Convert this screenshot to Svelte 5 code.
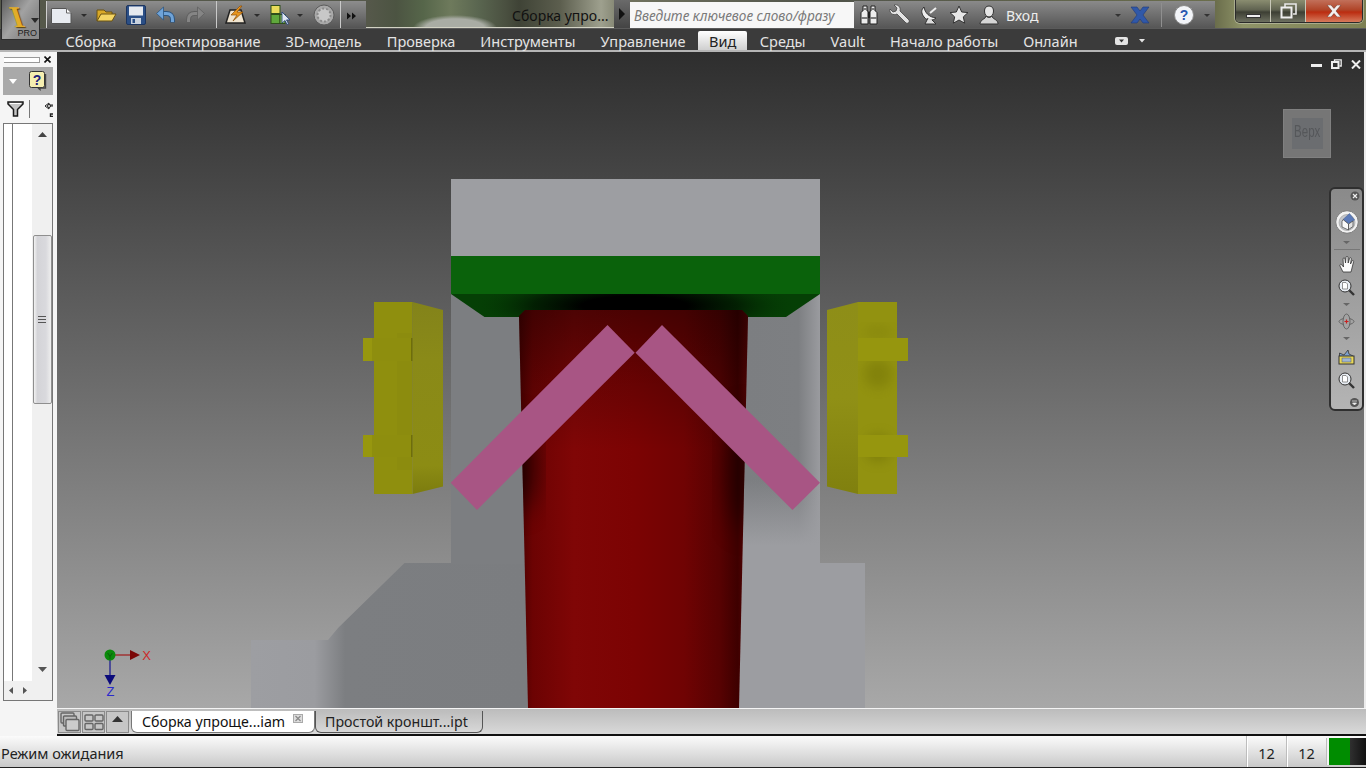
<script>
  const menu = ['Сборка', 'Проектирование', '3D-модель', 'Проверка', 'Инструменты', 'Управление', 'Вид', 'Среды', 'Vault', 'Начало работы', 'Онлайн'];
</script>

<div class="app">
  <header class="titlebar">
    <div class="appbtn">
      <span class="appi">I</span>
      <svg class="apparrow" width="8" height="5" viewBox="0 0 8 5"><path d="M0 0h8L4 5z" fill="#2a2a2a" /></svg>
      <span class="pro">PRO</span>
    </div>

    <div class="qat">
      <svg width="320" height="28" viewBox="46 1 320 28">
        <!-- new -->
        <path d="M51.500 8.500h15l4.500 4.500v10.500h-19.500z" fill="#e8ebf0" stroke="#555" />
        <path d="M66.500 8.500v4.500h4.500" fill="#fff" stroke="#666" />
        <path d="M81 14h6l-3 3z" fill="#2c2c2c" />
        <!-- open -->
        <path d="M97 21V10h7l2 2h6v3" fill="#d9a928" stroke="#6b5312" />
        <path d="M97 21l4-7h15l-4 7z" fill="#f4d564" stroke="#6b5312" />
        <!-- save -->
        <rect x="126.500" y="5.500" width="19" height="19" rx="1.500" fill="#2b4f86" stroke="#1c3560" />
        <rect x="129" y="6.500" width="14" height="9" fill="#e5e9ef" />
        <rect x="131" y="18" width="10" height="6" fill="#c9d2de" />
        <rect x="132.500" y="19" width="2.500" height="4" fill="#2b4f86" />
        <!-- undo / redo -->
        <path d="M172.500 22.500v-3c0-4-2.500-6-6-6H161" fill="none" stroke="#2d557f" stroke-width="5" />
        <path d="M172.500 22v-2.500c0-4-2.500-6-6-6H161" fill="none" stroke="#6fa3d8" stroke-width="3" />
        <path d="M156.500 13.500l7-6.500v13z" fill="#6fa3d8" stroke="#2d557f" stroke-width="0.800" />
        <path d="M188.500 22.500v-3c0-4 2.500-6 6-6H200" fill="none" stroke="#5f5f5f" stroke-width="5" />
        <path d="M188.500 22v-2.500c0-4 2.500-6 6-6H200" fill="none" stroke="#858585" stroke-width="3" />
        <path d="M204.500 13.500l-7-6.500v13z" fill="#858585" stroke="#5f5f5f" stroke-width="0.800" />
        <path d="M216.500 1v28" stroke="#c9c9c9" />
        <!-- update -->
        <path d="M226 23l4-13h11l4 13z" fill="#f0e4cf" stroke="#222" stroke-width="1.500" />
        <path d="M240 6l-9 9h6l-4 6 10-9h-6l5-6z" fill="#e8951f" stroke="#8a4e08" stroke-width="0.700" />
        <path d="M254 14h6l-3 3z" fill="#2c2c2c" />
        <!-- select -->
        <rect x="271" y="5.500" width="9" height="8" fill="#e9dc5a" stroke="#2f4f1a" />
        <rect x="271" y="14.500" width="9" height="9" fill="#5fa83c" stroke="#2f4f1a" />
        <rect x="280" y="14.500" width="5" height="9" fill="#8cbc62" stroke="#2f4f1a" />
        <path d="M282 12v11l3-2.500 2 4 1.500-.8-2-3.800h3.500z" fill="#dfe6f2" stroke="#1d3c77" stroke-width="0.800" />
        <path d="M297 14h6l-3 3z" fill="#2c2c2c" />
        <!-- material -->
        <circle cx="324" cy="15" r="10" fill="#a9a9a9" stroke="#5c5c5c" />
        <circle cx="324" cy="15" r="6.500" fill="#c8c8c8" stroke="#8b8b8b" stroke-dasharray="2 2" stroke-width="2" />
        <path d="M340.500 1v28" stroke="#c9c9c9" />
        <path d="M347 12.500l4 3.500-4 3.500zM352 12.500l4 3.500-4 3.500z" fill="#111" />
      </svg>
    </div>

    <div class="doctitle">Сборка упро...</div>
    <div class="searchbtn"><svg width="6" height="12" viewBox="0 0 6 12"><path d="M0 0l6 6-6 6z" fill="#111" /></svg></div>
    <div class="search">Введите ключевое слово/фразу</div>

    <div class="infobar">
      <svg class="binoc" width="20" height="20" viewBox="0 0 20 20">
        <path d="M4 1h4v5h1v13H2V8c0-1 1-2 2-2zM12 1h4v5c1 0 2 1 2 2v11h-7V6h1z" fill="#ececec" stroke="#222" />
        <path d="M9 7h2v6H9z" fill="#222" />
        <path d="M2.500 13h6M11.500 13h6M4.500 4h3M12.500 4h3" stroke="#555" stroke-width="1.600" />
      </svg>
      <svg class="wrench" width="22" height="22" viewBox="0 0 22 22">
        <path d="M2 5l3 3 3-1 1-3-3-3c4-1 7 2 6 6l9 9c1 2-1 4-3 3l-9-9C5 12 1 9 2 5z" fill="#e4e4e4" stroke="#444" stroke-width="0.800" />
      </svg>
      <svg class="sat" width="20" height="20" viewBox="0 0 20 20">
        <path d="M4 2c1 6 5 10 12 11-3 3-9 3-12-1s-3-7 0-10z" fill="#eee" stroke="#333" />
        <path d="M8 13L5 19h11l-4-4" fill="#ddd" stroke="#333" />
        <path d="M10 8l6-5" stroke="#eee" stroke-width="2" />
      </svg>
      <svg class="star" width="20" height="20" viewBox="0 0 20 20">
        <path d="M10 1l2.700 6 6.300.600-4.700 4.300 1.400 6.300L10 15l-5.700 3.200 1.400-6.300L1 7.600 7.300 7z" fill="#e6e6e6" stroke="#333" />
      </svg>
      <svg class="user" width="20" height="20" viewBox="0 0 20 20">
        <path d="M10 1c3 0 4.500 2 4.500 5s-1.500 6-4.500 6-4.500-3-4.500-6 1.500-5 4.500-5z" fill="#e6e6e6" stroke="#333" />
        <path d="M7 11c0 3-5 3-6 7v1h18v-1c-1-4-6-4-6-7-2 2-4 2-6 0z" fill="#d6d6d6" stroke="#333" />
      </svg>
      <span class="login">Вход</span>
      <svg class="drop" width="6" height="3" viewBox="0 0 6 3"><path d="M0 0h6L3 3z" fill="#333" /></svg>
      <svg class="xlogo" width="20" height="18" viewBox="0 0 20 18">
        <path d="M1 1h6l3 4 3-4h6l-6 8 6 8h-6l-3-4-3 4H1l6-8z" fill="#3058a8" stroke="#1e3a78" stroke-width="0.600" />
      </svg>
      <span class="infosep"></span>
      <svg class="help" width="20" height="20" viewBox="0 0 20 20">
        <circle cx="10" cy="10" r="9.500" fill="#f2f4f8" stroke="#8a8a8a" />
        <text x="10" y="15" text-anchor="middle" font-size="14" font-weight="700" font-family="Liberation Sans, sans-serif" fill="#2a57b0">?</text>
      </svg>
      <svg class="drop2" width="6" height="3" viewBox="0 0 6 3"><path d="M0 0h6L3 3z" fill="#333" /></svg>
    </div>

    <div class="winctl">
      <div class="wbtn"><span class="wmin"></span></div>
      <div class="wbtn">
        <svg width="17" height="16" viewBox="0 0 17 16">
          <path d="M5 4V1h11v10h-3" fill="none" stroke="#e8e8e8" stroke-width="1.600" />
          <rect x="1.500" y="4.500" width="10" height="10" fill="none" stroke="#eee" stroke-width="2" />
        </svg>
      </div>
      <div class="wbtn wclose">
        <svg width="16" height="12" viewBox="0 0 16 12"><path d="M1 0h4l3 3.500L11 0h4l-5 6 5 6h-4L8 8.500 5 12H1l5-6z" fill="#f4f0ee" stroke="#5a2a20" stroke-width="0.500" /></svg>
      </div>
    </div>
  </header>

  <nav class="menubar">
    {#each menu as item}
      <span class="menuitem" class:active={item === 'Вид'}>{item}</span>
    {/each}
    <svg class="menumore" width="30" height="10" viewBox="0 0 30 10">
      <rect x="0" y="1" width="13" height="8" rx="2" fill="#e4e4e4" />
      <path d="M4 3.500h5L6.500 6.500z" fill="#333" />
      <path d="M24 3h6l-3 3.500z" fill="#e4e4e4" />
    </svg>
  </nav>

  <div class="workspace">
    <aside class="browser">
      <div class="browserhead">
        <span class="grip"></span>
        <svg width="7" height="7" viewBox="0 0 7 7"><path d="M0.500 0.500l6 6M6.500 0.500l-6 6" stroke="#111" stroke-width="1.600" /></svg>
      </div>
      <div class="browserbar">
        <svg width="8" height="5" viewBox="0 0 8 5"><path d="M0 0h8L4 5z" fill="#fff" /></svg>
        <svg class="qmark" width="18" height="20" viewBox="0 0 18 20">
          <rect x="0.500" y="0.500" width="15" height="16" rx="2" fill="#f6efb0" stroke="#333" />
          <path d="M16.500 3v14H11v1.500L9 17" fill="none" stroke="#444" stroke-width="1.400" />
          <text x="8" y="14" text-anchor="middle" font-size="14" font-weight="700" font-family="Liberation Sans, sans-serif" fill="#22227a">?</text>
        </svg>
      </div>
      <div class="browsertools">
        <svg width="17" height="16" viewBox="0 0 17 16">
          <path d="M1 1h15v2l-5.500 5.500V15h-4V8.500L1 3z" fill="#c4c4c4" stroke="#1a1a1a" stroke-width="1.500" />
          <path d="M3 2.500h11" stroke="#fff" />
        </svg>
        <span class="toolsep"></span>
        <svg class="clipped" width="8" height="15" viewBox="0 0 8 15">
          <path d="M0 4l4-3v2h4M0 4l4 3V5M4 4h4" stroke="#222" fill="none" />
          <circle cx="4" cy="4" r="1.500" fill="#fff" stroke="#222" />
          <path d="M8 12H5.500v2.500H8" stroke="#222" fill="none" stroke-width="1.400" />
        </svg>
      </div>
      <div class="treebox">
        <div class="treemain">
          <div class="treegutter"></div>
          <div class="treelist"></div>
          <div class="vscroll">
            <svg class="sarrow" width="9" height="5" viewBox="0 0 9 5"><path d="M0 5h9L4.500 0z" fill="#444" /></svg>
            <div class="thumb"><span></span><span></span><span></span></div>
            <svg class="sarrow down" width="9" height="5" viewBox="0 0 9 5"><path d="M0 0h9L4.500 5z" fill="#555" /></svg>
          </div>
        </div>
        <div class="hscroll">
          <svg width="4" height="7" viewBox="0 0 4 7"><path d="M4 0v7L0 3.500z" fill="#555" /></svg>
          <svg width="4" height="7" viewBox="0 0 4 7"><path d="M0 0v7l4-3.500z" fill="#555" /></svg>
        </div>
      </div>
    </aside>

    <main class="viewport">
      <svg class="scene" width="1307" height="656" viewBox="57 52 1307 656">
        <defs>
          <linearGradient id="cyl" gradientUnits="userSpaceOnUse" x1="519" y1="0" x2="748" y2="0">
            <stop offset="0" stop-color="#4a0000" />
            <stop offset="0.060" stop-color="#6c0303" />
            <stop offset="0.240" stop-color="#800606" />
            <stop offset="0.500" stop-color="#7c0303" />
            <stop offset="0.720" stop-color="#700303" />
            <stop offset="0.880" stop-color="#560202" />
            <stop offset="0.955" stop-color="#3e0000" />
            <stop offset="1" stop-color="#5a0404" />
          </linearGradient>
          <linearGradient id="cyltop" x1="0" y1="0" x2="0" y2="1">
            <stop offset="0" stop-color="#000" stop-opacity="0.400" />
            <stop offset="0.170" stop-color="#000" stop-opacity="0.180" />
            <stop offset="0.350" stop-color="#000" stop-opacity="0" />
          </linearGradient>
          <linearGradient id="baseleft" gradientUnits="userSpaceOnUse" x1="251" y1="0" x2="528" y2="0">
            <stop offset="0" stop-color="#9d9ea2" />
            <stop offset="0.230" stop-color="#9b9ca0" />
            <stop offset="0.340" stop-color="#7c7e81" />
            <stop offset="1" stop-color="#7b7d80" />
          </linearGradient>
          <linearGradient id="bodyright" gradientUnits="userSpaceOnUse" x1="748" y1="0" x2="820" y2="0">
            <stop offset="0" stop-color="#7c7e81" />
            <stop offset="0.700" stop-color="#7d7f82" />
            <stop offset="1" stop-color="#9a9b9f" />
          </linearGradient>
          <linearGradient id="bodyfade" gradientUnits="userSpaceOnUse" x1="0" y1="480" x2="0" y2="545">
            <stop offset="0" stop-color="#9c9da1" stop-opacity="0" />
            <stop offset="1" stop-color="#9c9da1" />
          </linearGradient>
          <radialGradient id="contact" gradientUnits="userSpaceOnUse" cx="635" cy="306" r="165" gradientTransform="translate(0 247.860) scale(1 0.190)">
            <stop offset="0.320" stop-color="#000" />
            <stop offset="0.620" stop-color="#021a02" stop-opacity="0.850" />
            <stop offset="1" stop-color="#053f05" stop-opacity="0" />
          </radialGradient>
          <linearGradient id="yellowsideL" x1="0" y1="0" x2="0" y2="1">
            <stop offset="0" stop-color="#83831a" />
            <stop offset="0.300" stop-color="#8a8a18" />
            <stop offset="0.850" stop-color="#8c8c14" />
            <stop offset="1" stop-color="#7c7c0e" />
          </linearGradient>
          <linearGradient id="yellowsideR" x1="0" y1="0" x2="0" y2="1">
            <stop offset="0" stop-color="#8e8e18" />
            <stop offset="0.500" stop-color="#909016" />
            <stop offset="1" stop-color="#80800e" />
          </linearGradient>
          <filter id="soft" x="-50%" y="-50%" width="200%" height="200%"><feGaussianBlur stdDeviation="14" /></filter>
          <filter id="softer" x="-50%" y="-50%" width="200%" height="200%"><feGaussianBlur stdDeviation="6" /></filter>
          <clipPath id="cylclip"><path d="M519 316l6-6h217l6 6 -9 392h-211z" /></clipPath>
          <clipPath id="rightclip"><rect x="858" y="302" width="39" height="192" /></clipPath>
        </defs>

        <!-- gray bracket -->
        <path d="M404.500 563H528V708H251V640H328L338 628z" fill="url(#baseleft)" />
        <rect x="451" y="294" width="80" height="270" fill="#7c7e81" />
        <rect x="740" y="294" width="80" height="270" fill="url(#bodyright)" />
        <rect x="740" y="480" width="80" height="84" fill="url(#bodyfade)" />
        <rect x="735" y="563" width="130" height="145" fill="#9c9da1" />
        <rect x="451" y="179" width="369" height="77" fill="#9d9ea2" />

        <!-- green plate -->
        <rect x="451" y="256" width="369" height="38" fill="#0a620b" />
        <path d="M451 294H820L786 317H484.500z" fill="#053f05" />
        <path d="M451 294H820L786 317H484.500z" fill="url(#contact)" />

        <!-- red cylinder -->
        <path d="M519 316l6-6h217l6 6-9 392h-211z" fill="url(#cyl)" />
        <g clip-path="url(#cylclip)">
          <rect x="519" y="310" width="229" height="398" fill="url(#cyltop)" />
          <ellipse cx="518" cy="465" rx="14" ry="46" fill="#000" opacity="0.800" filter="url(#soft)" />
          <ellipse cx="748" cy="470" rx="18" ry="60" fill="#000" opacity="0.550" filter="url(#soft)" />
        </g>

        <!-- pink beams -->
        <path d="M607.500 325L634.700 352.700 477 510 450.700 482.700z" fill="#a85584" />
        <path d="M662 325L635.500 352.700 792.500 510 820 482.700z" fill="#a85584" />

        <!-- yellow clips -->
        <path d="M412.500 302L443 310V486.500L412.500 494z" fill="url(#yellowsideL)" />
        <rect x="374" y="302" width="38.500" height="192" fill="#8f8f0e" />
        <rect x="397" y="333" width="15" height="137" fill="#8c8c0e" />
        <rect x="363" y="338" width="49" height="23" fill="#8e8e0e" />
        <rect x="363" y="338" width="9" height="23" fill="#97970f" />
        <rect x="411" y="338" width="1.500" height="23" fill="#6e6e0a" />
        <rect x="363" y="435" width="49" height="22" fill="#8e8e0e" />
        <rect x="363" y="435" width="9" height="22" fill="#97970f" />
        <rect x="411" y="435" width="1.500" height="22" fill="#6e6e0a" />
        <path d="M858 302L827 310V486.500L858 494z" fill="url(#yellowsideR)" />
        <rect x="858" y="302" width="39" height="192" fill="#929210" />
        <g clip-path="url(#rightclip)">
          <ellipse cx="878" cy="374" rx="14" ry="14" fill="#5e5e04" opacity="0.300" filter="url(#softer)" />
          <ellipse cx="878" cy="448" rx="14" ry="14" fill="#5e5e04" opacity="0.350" filter="url(#softer)" />
          <ellipse cx="878" cy="332" rx="14" ry="5" fill="#5e5e04" opacity="0.200" filter="url(#softer)" />
        </g>
        <rect x="858" y="338" width="50" height="23" fill="#96960e" />
        <rect x="858" y="435" width="50" height="22" fill="#96960e" />

        <!-- triad -->
        <path d="M110 655H131" stroke="#a01818" stroke-width="1.200" />
        <path d="M130 650l10 5-10 5z" fill="#7a0808" />
        <path d="M110 655V676" stroke="#141490" stroke-width="1.200" />
        <path d="M104.500 675h11L110 685z" fill="#0a0a7a" />
        <circle cx="110" cy="655" r="5.500" fill="#0a8a0a" />
        <text x="110" y="658.500" text-anchor="middle" font-size="9" font-family="Liberation Sans, sans-serif" fill="#0a5a0a">Y</text>
        <text x="146.500" y="660" text-anchor="middle" font-size="13" font-family="Liberation Sans, sans-serif" fill="#cc2a2a">X</text>
        <text x="110.500" y="696" text-anchor="middle" font-size="13" font-family="Liberation Sans, sans-serif" fill="#2a2acc">Z</text>
      </svg>

      <div class="vpctl">
        <span class="vmin"></span>
        <svg width="11" height="10" viewBox="0 0 11 10">
          <path d="M3.500 2V.8h6.700v6.200H8.500" fill="none" stroke="#eee" stroke-width="1.300" />
          <rect x="1" y="3" width="6.500" height="6" fill="none" stroke="#eee" stroke-width="2" />
        </svg>
        <svg width="10" height="9" viewBox="0 0 10 9"><path d="M1 0.500l8 8M9 0.500l-8 8" stroke="#eee" stroke-width="2" /></svg>
      </div>

      <div class="viewcube"><div class="cubeface"><span>Верх</span></div></div>

      <div class="navbar">
        <svg class="navx" width="10" height="10" viewBox="0 0 10 10">
          <circle cx="5" cy="5" r="4.500" fill="#555" />
          <path d="M3 3l4 4M7 3l-4 4" stroke="#eee" stroke-width="1.200" />
        </svg>
        <svg class="wheel" width="24" height="24" viewBox="0 0 24 24">
          <circle cx="12" cy="12" r="11.300" fill="#f2f2f2" stroke="#7a7a7a" />
          <circle cx="12" cy="12.500" r="8" fill="#c4c6ca" stroke="#9a9a9a" stroke-width="0.600" />
          <path d="M8 9.500l6.500-6 5 6.500-6 4z" fill="#5b7ab8" stroke="#3f5a90" stroke-width="0.500" />
          <path d="M7 11.500l1-2 5.500 4.500v6l-6.500-3z" fill="#fbfbfb" stroke="#444" stroke-width="0.700" />
          <path d="M13.500 14l4.500-3v5.500l-4.500 3z" fill="#e2e2e2" stroke="#444" stroke-width="0.700" />
        </svg>
        <svg class="tri" width="7" height="3" viewBox="0 0 7 3"><path d="M0 0h7L3.500 3z" fill="#666" /></svg>
        <span class="navsep"></span>
        <svg class="hand" width="18" height="18" viewBox="0 0 18 18">
          <path d="M5 17l-3-6c-1-2 1-2 2-1l1.500 2L5 4c0-1.500 2-1.500 2 0l.5 4L8 2.500c0-1.500 2-1.500 2 0l.2 5.500L11.500 3.500c.3-1.500 2-1 1.800.5L12.500 9l1.500-3c.6-1.200 2-.6 1.600.6L14 13l-1 4z" fill="#fbfbfb" stroke="#333" stroke-width="0.800" />
        </svg>
        <svg class="zoom" width="17" height="17" viewBox="0 0 17 17">
          <path d="M10.500 10.500l5.500 5.500" stroke="#333" stroke-width="2.400" />
          <circle cx="7" cy="7" r="6" fill="#e9eef4" stroke="#333" />
          <path d="M4.500 3.500h3.500l1.500 1.500v5h-5z" fill="#fff" stroke="#666" stroke-width="0.700" />
        </svg>
        <svg class="tri" width="7" height="3" viewBox="0 0 7 3"><path d="M0 0h7L3.500 3z" fill="#666" /></svg>
        <svg class="orbit" width="17" height="17" viewBox="0 0 17 17">
          <ellipse cx="8.500" cy="8.500" rx="3.500" ry="7.500" fill="none" stroke="#666" />
          <path d="M6 5.500C3 6 1 7.500 1 8.500s2 2.500 5 3M11 5.500c3 .5 5 2 5 3s-2 2.500-5 3" fill="none" stroke="#666" />
          <path d="M8.500 6.500v4M6.500 8.500h4" stroke="#c82020" stroke-width="1.200" />
        </svg>
        <svg class="tri" width="7" height="3" viewBox="0 0 7 3"><path d="M0 0h7L3.500 3z" fill="#666" /></svg>
        <svg class="lookat" width="17" height="16" viewBox="0 0 17 16">
          <path d="M1.500 7V4L6 6l4-5 1 4 4 2" fill="#7da0cc" stroke="#333" stroke-width="0.800" />
          <rect x="1" y="7" width="15" height="8" fill="#e8d85a" stroke="#333" />
          <rect x="4" y="9" width="9" height="4" fill="#9fb6d2" stroke="#555" stroke-width="0.500" />
        </svg>
        <svg class="zoom last" width="17" height="17" viewBox="0 0 17 17">
          <path d="M10.500 10.500l5.500 5.500" stroke="#333" stroke-width="2.400" />
          <circle cx="7" cy="7" r="6" fill="#e9eef4" stroke="#333" />
          <path d="M4.500 3.500h3.500l1.500 1.500v5h-5z" fill="#fff" stroke="#666" stroke-width="0.700" />
        </svg>
        <svg class="navdown" width="9" height="9" viewBox="0 0 9 9">
          <circle cx="4.500" cy="4.500" r="4.500" fill="#555" />
          <path d="M2 3h5M2.500 5h4L4.500 7z" stroke="#eee" stroke-width="0.700" fill="#eee" />
        </svg>
      </div>
    </main>
    <div class="rightedge"></div>
  </div>

  <div class="tabrow">
    <div class="tabgutter"></div>
    <div class="tabbar">
      <div class="tabbtn">
        <svg width="20" height="20" viewBox="0 0 20 20">
          <rect x="1" y="1" width="13" height="10" rx="1" fill="none" stroke="#666" stroke-width="1.400" />
          <rect x="3.500" y="4" width="13" height="10" rx="1" fill="#bbb" stroke="#666" stroke-width="1.400" />
          <rect x="6" y="7.500" width="13" height="11" rx="1" fill="#ccc" stroke="#666" stroke-width="1.400" />
        </svg>
      </div>
      <div class="tabbtn">
        <svg width="20" height="18" viewBox="0 0 20 18">
          <rect x="1" y="2" width="8" height="6" rx="1" fill="none" stroke="#666" stroke-width="1.400" />
          <rect x="11" y="2" width="8" height="6" rx="1" fill="none" stroke="#666" stroke-width="1.400" />
          <rect x="1" y="10.500" width="8" height="6" rx="1" fill="none" stroke="#666" stroke-width="1.400" />
          <rect x="11" y="10.500" width="8" height="6" rx="1" fill="none" stroke="#666" stroke-width="1.400" />
        </svg>
      </div>
      <div class="tabbtn up">
        <svg width="11" height="6" viewBox="0 0 11 6"><path d="M0 6h11L5.500 0z" fill="#333" /></svg>
      </div>
      <div class="doctab active">
        <span>Сборка упроще...iam</span>
        <svg class="tabx" width="10" height="9" viewBox="0 0 10 9">
          <rect x="0.500" y="0.500" width="9" height="8" fill="#ddd" stroke="#aaa" />
          <path d="M2.500 2l5 5M7.500 2l-5 5" stroke="#888" stroke-width="1.200" />
        </svg>
      </div>
      <div class="doctab"><span>Простой кроншт...ipt</span></div>
    </div>
  </div>

  <footer class="statusbar">
    <span class="statustext">Режим ожидания</span>
    <span class="statuscell">12</span>
    <span class="statuscell">12</span>
    <span class="meter"><span class="meterfill"></span></span>
  </footer>
</div>

<style>
  :global(body) {
    margin: 0;
    overflow: hidden;
    background: #3a3a3a;
  }

  .app {
    width: 1366px;
    height: 768px;
    display: flex;
    flex-direction: column;
    position: relative;
    overflow: hidden;
    font-family: "Noto Sans", "Open Sans", sans-serif;
  }

  /* Title bar */
  .titlebar {
    height: 28px;
    flex: none;
    display: flex;
    align-items: flex-start;
    background:
      linear-gradient(#d2d2c4, #d2d2c4) 366px 27px / 248px 1px no-repeat,
      radial-gradient(ellipse 42px 13px at 455px 28px, #a9aca4 70%, rgba(169, 172, 164, 0) 100%) no-repeat,
      linear-gradient(90deg, #55584a 0, #55584a 27%, #4c5442 29%, #56664a 31%, #6e7a5c 33%, #5a6650 35%, #4a5040 37%, #3f4336 38%, #5c5e4e 41%, #9ea08e 44%, #70725e 46%, #50534a 60%, #6b6e4c 89%, #8f9468 91%, #7d8052 100%);
  }

  .appbtn {
    position: absolute;
    left: 1px;
    top: 0;
    width: 39px;
    height: 40px;
    background: linear-gradient(125deg, #5f5f5f 0, #a2a2a2 45%, #8f8f8f 65%, #8a8a8a 100%);
    border: 1px solid #2c2c2c;
    border-top: 0;
    box-sizing: border-box;
    z-index: 3;
  }

  .appi {
    position: absolute;
    left: 9px;
    top: 2px;
    font: 700 30px/30px "Liberation Serif", serif;
    color: #e2ad2a;
    text-shadow: 1px 1px 1px #5d4208;
    transform: skewX(18deg);
  }

  .apparrow {
    position: absolute;
    left: 29px;
    top: 18px;
  }

  .pro {
    position: absolute;
    right: 2px;
    bottom: 1px;
    font: 9px/10px "Liberation Sans", sans-serif;
    color: #1d1d1d;
  }

  .qat {
    margin-left: 46px;
    margin-top: 1px;
    width: 320px;
    height: 28px;
    background: linear-gradient(#8d8d8d, #6e6e6e 55%, #525252);
    box-shadow: inset 1px 0 #cfcfcf;
    flex: none;
  }

  .qat svg {
    display: block;
  }

  .doctitle {
    margin-left: 146px;
    width: 102px;
    flex: none;
    height: 28px;
    font-size: 14px;
    line-height: 32px;
    color: #111;
    white-space: nowrap;
  }

  .searchbtn {
    width: 16px;
    height: 28px;
    flex: none;
    display: flex;
    align-items: center;
    justify-content: center;
    background: linear-gradient(#6a6a6a, #444);
  }

  .search {
    width: 224px;
    height: 26px;
    flex: none;
    box-sizing: border-box;
    margin-top: 2px;
    padding-left: 4px;
    background: #f7f7f7;
    color: #7a7a7a;
    font-size: 13.600px;
    font-style: italic;
    line-height: 28px;
    white-space: nowrap;
  }

  .infobar {
    width: 361px;
    height: 28px;
    margin-top: 1px;
    flex: none;
    display: flex;
    align-items: center;
    background: linear-gradient(#8a8a8a, #6c6c6c 55%, #545454);
    color: #eee;
    font-size: 14px;
  }

  .binoc { margin-left: 5px; }
  .wrench { margin-left: 9px; }
  .sat { margin-left: 10px; }
  .star { margin-left: 9px; }
  .user { margin-left: 10px; }
  .login { margin-left: 7px; width: 109px; }
  .drop { flex: none; }
  .xlogo { margin-left: 9px; }
  .infosep { margin-left: 11px; width: 1px; height: 24px; background: #8f8f8f; }
  .help { margin-left: 12px; }
  .drop2 { margin-left: 10px; }

  .winctl {
    margin-left: 20px;
    width: 128px;
    height: 23px;
    flex: none;
    display: flex;
    box-sizing: border-box;
    border: 1px solid #2b2b2b;
    border-top: 0;
    border-radius: 0 0 5px 5px;
    overflow: hidden;
    box-shadow: 0 0 0 1px rgba(255, 255, 255, 0.300);
  }

  .wbtn {
    width: 34px;
    flex: none;
    display: flex;
    align-items: center;
    justify-content: center;
    background: linear-gradient(#8a8d70, #5f6250 45%, #3d3f34 55%, #6d7060);
    border-right: 1px solid #c8c8b8;
  }

  .wmin {
    width: 15px;
    height: 4px;
    margin-top: 9px;
    background: #eee;
    border: 1px solid #333;
    box-sizing: border-box;
  }

  .wclose {
    flex: 1;
    border-right: 0;
    background: linear-gradient(#c2705a, #b04428 45%, #bb2c10 55%, #d77a5c);
  }

  /* Ribbon tab row */
  .menubar {
    height: 22px;
    flex: none;
    display: flex;
    align-items: flex-end;
    padding-left: 53px;
    background: #3b3b3b;
    border-bottom: 2px solid #b5b5b5;
    box-shadow: inset 0 1px #5a5a5a;
  }

  .menuitem {
    padding: 0 12.500px;
    height: 19px;
    font-size: 14.500px;
    line-height: 21px;
    color: #e4e4e4;
    white-space: nowrap;
    box-sizing: border-box;
  }

  .menuitem.active {
    padding: 0 11px;
    color: #222;
    background: linear-gradient(#fff, #cfcfcf);
    border-radius: 2px 2px 0 0;
  }

  .menumore {
    margin-left: 25px;
    margin-bottom: 4px;
  }

  /* Body */
  .workspace {
    height: 656px;
    flex: none;
    display: flex;
  }

  .browser {
    width: 57px;
    flex: none;
    background: #f5f5f5;
    padding: 0 4px 0 3px;
    box-sizing: border-box;
    display: flex;
    flex-direction: column;
  }

  .browserhead {
    height: 15px;
    flex: none;
    display: flex;
    align-items: center;
    gap: 4px;
    padding: 0 0 0 1px;
  }

  .grip {
    width: 35px;
    height: 4px;
    border: 1px solid #999;
    border-left: 0;
    background: #fff;
  }

  .browserbar {
    height: 28px;
    flex: none;
    display: flex;
    align-items: center;
    background: #a9a9a9;
    padding-left: 6px;
  }

  .qmark {
    margin-left: 12px;
  }

  .browsertools {
    height: 28px;
    flex: none;
    display: flex;
    align-items: center;
    padding-left: 4px;
  }

  .toolsep {
    width: 1px;
    height: 18px;
    background: #777;
    margin-left: 5px;
  }

  .clipped {
    margin-left: 15px;
  }

  .treebox {
    flex: none;
    height: 578px;
    width: 50px;
    box-sizing: border-box;
    border: 1px solid #777;
    display: flex;
    flex-direction: column;
    background: #f4f4f4;
  }

  .treemain {
    flex: 1;
    display: flex;
    min-height: 0;
  }

  .treegutter {
    width: 8px;
    flex: none;
    border-right: 1px solid #777;
    background: #fff;
  }

  .treelist {
    width: 19px;
    flex: none;
    background: #fff;
  }

  .vscroll {
    flex: 1;
    display: flex;
    flex-direction: column;
    align-items: center;
    background: #f0f0f0;
  }

  .sarrow {
    margin-top: 8px;
    flex: none;
  }

  .sarrow.down {
    margin-top: auto;
    margin-bottom: 9px;
  }

  .thumb {
    margin-top: 98px;
    width: 19px;
    height: 169px;
    flex: none;
    box-sizing: border-box;
    border: 1px solid #8f8f8f;
    border-radius: 2px;
    background: linear-gradient(90deg, #f2f2f2, #d4d4d8 20%, #d9d9dd 70%, #eee);
    display: flex;
    flex-direction: column;
    align-items: center;
    justify-content: center;
    gap: 2px;
  }

  .thumb span {
    width: 8px;
    height: 1px;
    background: #555;
  }

  .hscroll {
    height: 19px;
    flex: none;
    display: flex;
    align-items: center;
    gap: 10px;
    padding-left: 5px;
    background: #f0f0f0;
  }

  .viewport {
    width: 1307px;
    flex: none;
    position: relative;
    background: linear-gradient(#2e2e2e, #a8a8a8);
    overflow: hidden;
  }

  .scene {
    display: block;
  }

  .rightedge {
    flex: 1;
    background: #ececec;
  }

  .vpctl {
    position: absolute;
    right: 3px;
    top: 7px;
    display: flex;
    align-items: center;
    gap: 9px;
  }

  .vmin {
    width: 11px;
    height: 3px;
    margin-top: 3px;
    background: #eee;
  }

  .viewcube {
    position: absolute;
    left: 1226px;
    top: 57px;
    width: 48px;
    height: 49px;
    box-sizing: border-box;
    border: 1px solid #808080;
    background: #767676;
    display: flex;
    align-items: center;
    justify-content: center;
  }

  .cubeface {
    width: 31px;
    height: 31px;
    background: #6b6d70;
    text-align: center;
    font: 16px/28px "Liberation Sans", sans-serif;
    color: #55575a;
  }

  .cubeface span {
    display: inline-block;
    margin-left: -3px;
    transform: scaleX(0.720);
  }

  .navbar {
    position: absolute;
    left: 1272px;
    top: 135px;
    width: 35px;
    height: 224px;
    box-sizing: border-box;
    border: 2px solid #2f2f2f;
    border-radius: 6px;
    background: linear-gradient(#8a8a8a, #b4b4b4);
    display: flex;
    flex-direction: column;
    align-items: center;
  }

  .navx {
    align-self: flex-end;
    margin: 2px 2px 0 0;
    flex: none;
  }

  .wheel { margin-top: 9px; flex: none; }
  .tri { margin-top: 7px; flex: none; }
  .navsep { width: 26px; height: 1px; background: #777; margin-top: 5px; flex: none; }
  .hand { margin-top: 5px; flex: none; }
  .zoom { margin-top: 6px; flex: none; }
  .orbit { margin-top: 7px; flex: none; }
  .lookat { margin-top: 9px; flex: none; }
  .zoom.last { margin-top: 7px; }

  .navdown {
    align-self: flex-end;
    margin: auto 3px 2px 0;
    flex: none;
  }

  /* Document tabs */
  .tabrow {
    height: 28px;
    flex: none;
    display: flex;
  }

  .tabgutter {
    width: 57px;
    flex: none;
    background: #f5f5f5;
  }

  .tabbar {
    flex: 1;
    display: flex;
    align-items: stretch;
    gap: 1px;
    padding: 2px 0 1px 1px;
    box-sizing: border-box;
    background: linear-gradient(#bcbcbc, #d9d9d9);
    border-top: 1px solid #f4f4f4;
    border-bottom: 2px solid #111;
  }

  .tabbtn {
    width: 23px;
    flex: none;
    display: flex;
    align-items: center;
    justify-content: center;
    background: #c6c6c6;
    border: 1px solid #8a8a8a;
    box-sizing: border-box;
  }

  .tabbtn.up {
    align-items: flex-start;
    padding-top: 4px;
    margin-right: 1px;
  }

  .doctab {
    flex: none;
    width: 168px;
    box-sizing: border-box;
    padding-left: 9px;
    display: flex;
    align-items: center;
    gap: 8px;
    font-size: 14.200px;
    color: #222;
    background: linear-gradient(#bdbdbd, #d8d8d8);
    border: 1px solid #555;
    border-top: 0;
    border-radius: 0 0 6px 6px;
    margin-left: -1px;
    white-space: nowrap;
  }

  .doctab.active {
    width: 184px;
    padding-left: 10px;
    background: #fff;
    margin-left: 0;
    color: #111;
    border-color: #777;
  }

  .tabx {
    align-self: flex-start;
    margin-top: 3px;
  }

  /* Status bar */
  .statusbar {
    height: 32px;
    flex: none;
    display: flex;
    align-items: stretch;
    box-sizing: border-box;
    background: linear-gradient(#fbfbfb, #c9c9c9);
    border-bottom: 1px solid #222;
    font-size: 14.500px;
    color: #222;
    line-height: 34px;
  }

  .statustext {
    flex: 1;
    padding-left: 1px;
  }

  .statuscell {
    width: 39px;
    flex: none;
    text-align: center;
    border-left: 1px solid #bdbdbd;
    box-shadow: inset 1px 0 #fff;
  }

  .meter {
    width: 37px;
    flex: none;
    margin: 2px 0;
    border-left: 1px solid #bdbdbd;
    padding-left: 2px;
    background: linear-gradient(90deg, #f2f2f2 0, #f2f2f2 3px, #555 3px, #111 100%);
  }

  .meterfill {
    display: block;
    width: 21px;
    height: 100%;
    background: #008c00;
  }
</style>
